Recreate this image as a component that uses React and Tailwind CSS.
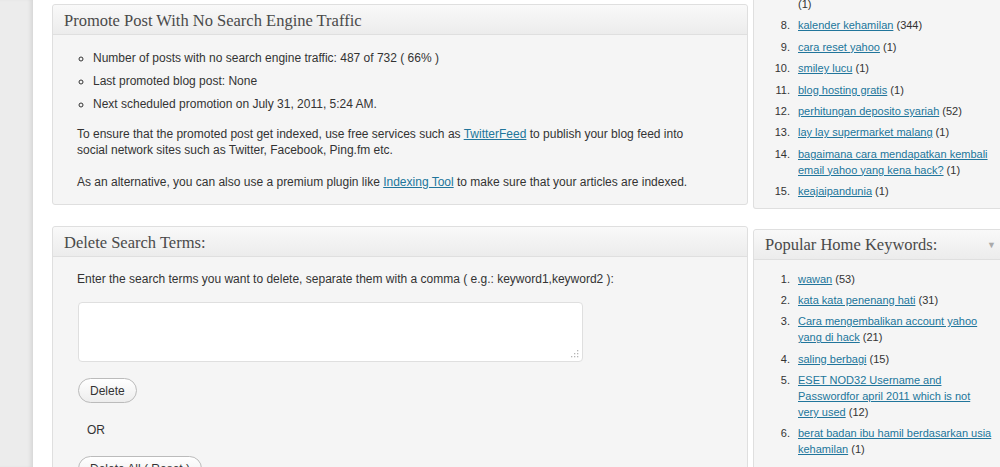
const sans = { fontFamily: '"Liberation Sans", Arial, sans-serif' }
const serif = { fontFamily: '"Liberation Serif", "Times New Roman", serif' }

const topKeywords = [
  { n: 8, text: 'kalender kehamilan', count: 344 },
  { n: 9, text: 'cara reset yahoo', count: 1 },
  { n: 10, text: 'smiley lucu', count: 1 },
  { n: 11, text: 'blog hosting gratis', count: 1 },
  { n: 12, text: 'perhitungan deposito syariah', count: 52 },
  { n: 13, text: 'lay lay supermarket malang', count: 1 },
  { n: 14, text: 'bagaimana cara mendapatkan kembali email yahoo yang kena hack?', count: 1 },
  { n: 15, text: 'keajaipandunia', count: 1 },
]

const homeKeywords = [
  { n: 1, text: 'wawan', count: 53 },
  { n: 2, text: 'kata kata penenang hati', count: 31 },
  { n: 3, text: 'Cara mengembalikan account yahoo yang di hack', count: 21 },
  { n: 4, text: 'saling berbagi', count: 15 },
  { n: 5, text: 'ESET NOD32 Username and Passwordfor april 2011 which is not very used', count: 12 },
  { n: 6, text: 'berat badan ibu hamil berdasarkan usia kehamilan', count: 1 },
  { n: 7, text: 'masyarakat madani', count: 1 },
]

function BoxHeader({ title, arrow }) {
  return (
    <div className="h-[30px] flex items-center justify-between px-[11px] pt-[3px] border-b border-[#dfdfdf] bg-gradient-to-b from-[#f9f9f9] to-[#ececec] rounded-t-[3px]">
      <h3 className="text-[16.5px] text-[#4a4a4a] leading-none" style={serif}>{title}</h3>
      {arrow && <span className="text-[9px] text-[#aaaaaa] mr-[3px]">▼</span>}
    </div>
  )
}

function KeywordList({ items }) {
  return (
    <ul className="text-[11px] leading-4 text-[#333]">
      {items.map((k) => (
        <li key={k.n} className="flex mb-[5.4px]">
          <span className="w-[44px] shrink-0 text-right pr-[8px]">{k.n}.</span>
          <span>
            <a href="#" className="text-[#21759b] underline">{k.text}</a> ({k.count})
          </span>
        </li>
      ))}
    </ul>
  )
}

function Button({ children }) {
  return (
    <button className="h-[25px] px-[11px] rounded-full border border-[#bbbbbb] bg-gradient-to-b from-white to-[#ededed] text-[12px] text-[#333]">
      {children}
    </button>
  )
}

export default function App() {
  return (
    <div className="w-[1000px] h-[467px] overflow-hidden flex bg-white" style={sans}>
      {/* admin menu edge */}
      <div className="w-[33px] shrink-0 bg-[#ececec] shadow-[inset_-4px_0_4px_-2px_rgba(0,0,0,0.1)]" />

      <div className="flex gap-[5px] pl-[19px]">
        {/* main column */}
        <div className="w-[696px] shrink-0 pt-[4px] flex flex-col gap-[21px]">
          <div className="border border-[#dfdfdf] rounded-[3px] bg-[#f5f5f5]">
            <BoxHeader title="Promote Post With No Search Engine Traffic" />
            <div className="pt-[12px] pb-[14px] text-[12px] text-[#333]">
              <ul className="list-[circle] pl-[40px]">
                <li className="leading-[23px]">Number of posts with no search engine traffic: 487 of 732 ( 66% )</li>
                <li className="leading-[23px]">Last promoted blog post: None</li>
                <li className="leading-[23px]">Next scheduled promotion on July 31, 2011, 5:24 AM.</li>
              </ul>
              <p className="mt-[10px] pl-[24px] pr-[40px] leading-4">
                To ensure that the promoted post get indexed, use free services such as{' '}
                <a href="#" className="text-[#21759b] underline">TwitterFeed</a> to publish your blog feed into
                social network sites such as Twitter, Facebook, Ping.fm etc.
              </p>
              <p className="mt-[16px] pl-[24px] pr-[40px] leading-4">
                As an alternative, you can also use a premium plugin like{' '}
                <a href="#" className="text-[#21759b] underline">Indexing Tool</a> to make sure that your articles are indexed.
              </p>
            </div>
          </div>

          <div className="border border-[#dfdfdf] rounded-[3px] bg-[#f5f5f5]">
            <BoxHeader title="Delete Search Terms:" />
            <div className="pt-[14px] pl-[24px] pb-4 text-[12px] text-[#333] flex flex-col items-start">
              <p className="leading-4">Enter the search terms you want to delete, separate them with a comma ( e.g.: keyword1,keyword2 ):</p>
              <div className="relative mt-[15px] ml-[1px]">
                <textarea className="block w-[505px] h-[60px] bg-white border border-[#dfdfdf] rounded-[4px] resize-none outline-none" />
                <svg className="absolute right-[4px] bottom-[4px]" width="9" height="9" viewBox="0 0 9 9" fill="#b5b5b5">
                  <rect x="7" y="1" width="1.3" height="1.3" />
                  <rect x="4" y="4" width="1.3" height="1.3" />
                  <rect x="7" y="4" width="1.3" height="1.3" />
                  <rect x="1" y="7" width="1.3" height="1.3" />
                  <rect x="4" y="7" width="1.3" height="1.3" />
                  <rect x="7" y="7" width="1.3" height="1.3" />
                </svg>
              </div>
              <div className="mt-[16px] ml-[1px]">
                <Button>Delete</Button>
              </div>
              <p className="mt-[19px] ml-[10px] leading-4">OR</p>
              <div className="mt-[18px] ml-[1px]">
                <Button>Delete All ( Reset )</Button>
              </div>
            </div>
          </div>
        </div>

        {/* sidebar column */}
        <div className="w-[258px] shrink-0 -mt-[4px] flex flex-col gap-[20px]">
          <div className="border-x border-b border-[#dfdfdf] rounded-b-[3px] bg-[#f5f5f5] pb-[3px] pr-[18px]">
            <p className="text-[11px] leading-4 text-[#333] pl-[44px] mb-[5.4px]">(1)</p>
            <KeywordList items={topKeywords} />
          </div>

          <div className="border border-[#dfdfdf] rounded-[3px] bg-[#f5f5f5]">
            <BoxHeader title="Popular Home Keywords:" arrow />
            <div className="pt-[11px] pr-[18px]">
              <KeywordList items={homeKeywords} />
            </div>
          </div>
        </div>
      </div>
    </div>
  )
}
